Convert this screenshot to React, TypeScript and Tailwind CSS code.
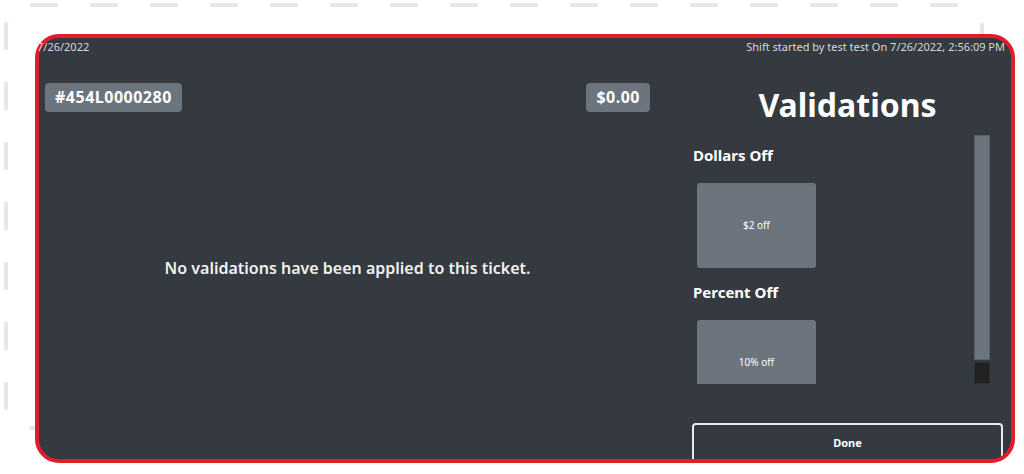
import React from 'react';

const font = { fontFamily: '"Noto Sans", "Open Sans", sans-serif' };

function ValidationTile({ label }: { label: string }) {
    return (
        <button className="ml-[5px] w-[119px] h-[85px] shrink-0 rounded-[3px] bg-[#6c757d] text-white text-[10px] flex items-center justify-center">
            {label}
        </button>
    );
}

export default function App() {
    return (
        <div className="relative w-[1024px] h-[474px] bg-white overflow-hidden" style={font}>
            {/* dashed outline behind the panel */}
            <svg className="absolute inset-0 pointer-events-none" width="1024" height="474">
                <rect x="6" y="5" width="976" height="423" rx="22" fill="none" stroke="#e3e6eb" strokeWidth="4" strokeDasharray="28 32" strokeDashoffset="-2" />
            </svg>

            <div className="relative ml-[35px] mt-[34px] w-[980px] h-[429px] border-4 border-[#e11c2c] rounded-[24px] bg-[#343a40] flex flex-col">
                {/* Top bar */}
                <div className="flex justify-between h-[18px] leading-[18px] text-[11px] text-[#d6d8db]">
                    <span className="-ml-[2px]">7/26/2022</span>
                    <span className="pr-[6px]">Shift started by test test On 7/26/2022, 2:56:09 PM</span>
                </div>

                <div className="flex flex-1 min-h-0 overflow-hidden rounded-b-[20px]">
                    {/* Ticket column */}
                    <div className="w-[617px] px-[6px] flex flex-col">
                        <div className="flex justify-between mt-[27px]">
                            <span className="h-[29px] px-[10px] rounded-[4px] bg-[#6c757d] text-white text-[16px] font-bold leading-[29px] tracking-[0.5px]">#454L0000280</span>
                            <span className="h-[29px] px-[10px] rounded-[4px] bg-[#6c757d] text-white text-[16px] font-bold leading-[29px] tracking-[0.5px]">$0.00</span>
                        </div>
                        <p className="mt-[146px] text-center text-[16px] font-semibold leading-[20px] text-[#f1f1f1]">
                            No validations have been applied to this ticket.
                        </p>
                    </div>

                    {/* Validations column */}
                    <div className="flex-1 pl-[36px] pr-[8px] flex flex-col">
                        <h1 className="mt-[29px] h-[40px] leading-[40px] text-center text-[32px] font-bold text-white">Validations</h1>

                        <div className="mt-[10px] h-[249px] shrink-0 flex pr-[13px] overflow-hidden">
                            <div className="flex-1 pt-[10px] flex flex-col">
                                <h2 className="ml-[1px] text-[15px] font-bold leading-[20px] text-white">Dollars Off</h2>
                                <div className="mt-[18px] flex">
                                    <ValidationTile label="$2 off" />
                                </div>
                                <h2 className="ml-[1px] mt-[14px] text-[15px] font-bold leading-[20px] text-white">Percent Off</h2>
                                <div className="mt-[18px] flex">
                                    <ValidationTile label="10% off" />
                                </div>
                            </div>
                            {/* scrollbar */}
                            <div className="w-[16px] flex flex-col">
                                <div className="h-[225px] bg-[#6c757d] border border-[#5a6168]" />
                                <div className="mt-[2px] h-[22px] bg-[#222222] border border-[#2c2f33]" />
                            </div>
                        </div>

                        <button className="mt-[39px] h-[40px] shrink-0 rounded-[4px] border-2 border-[#e9ecef] text-white text-[11px] font-bold">
                            Done
                        </button>
                    </div>
                </div>
            </div>
        </div>
    );
}
